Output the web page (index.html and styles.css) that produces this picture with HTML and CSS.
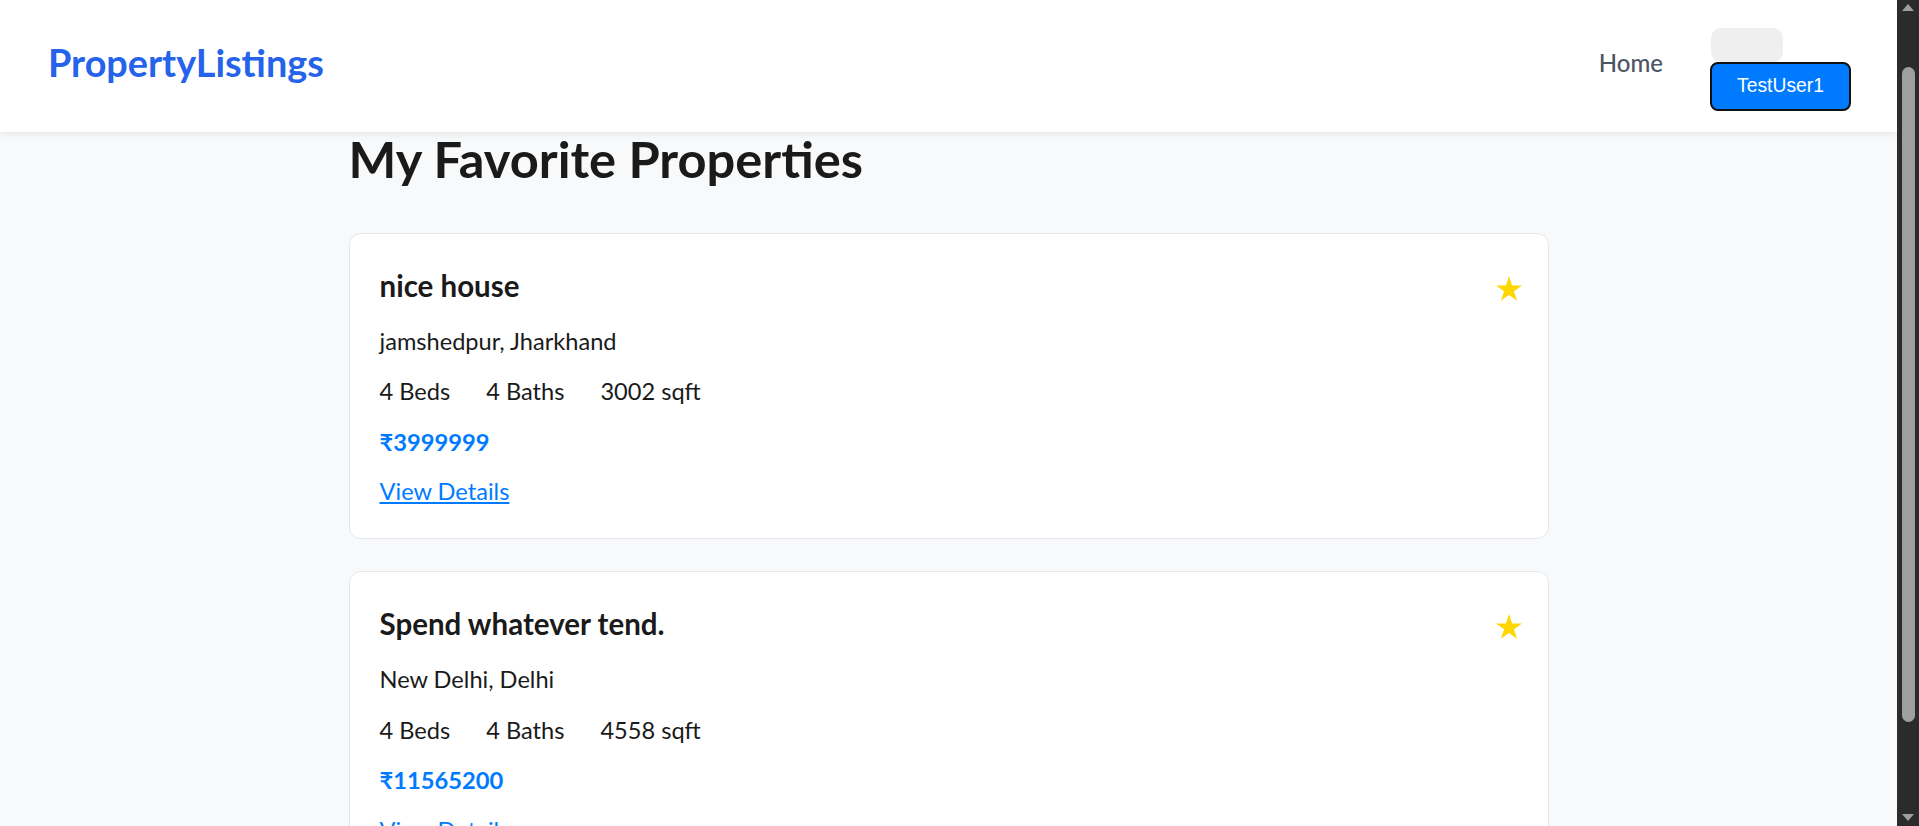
FILE: index.html
```html
<!DOCTYPE html>
<html lang="en">
<head>
<meta charset="utf-8">
<title>My Favorite Properties</title>
<link rel="stylesheet" href="styles.css">
</head>
<body>
<header class="navbar">
  <a class="logo" href="#">PropertyListings</a>
  <nav class="nav-links">
    <a class="nav-link" href="#">Home</a>
    <div class="user-menu">
      <button class="avatar-btn" aria-label="avatar"></button>
      <button class="user-btn">TestUser1</button>
    </div>
  </nav>
</header>
<main class="container">
  <h1 class="page-title">My Favorite Properties</h1>
  <div class="card-list">
    <article class="card">
      <div class="card-head">
        <h2 class="card-title">nice house</h2>
        <button class="fav-btn" aria-label="favorite"><svg viewBox="0 0 26 25" width="26" height="25"><path d="M13 0L16.07 9.45L26 9.45L17.96 15.28L21.03 24.73L13 18.89L4.97 24.73L8.04 15.28L0 9.45L9.93 9.45Z" fill="#ffd700"/></svg></button>
      </div>
      <p class="location">jamshedpur, Jharkhand</p>
      <div class="specs"><span>4 Beds</span><span>4 Baths</span><span>3002 sqft</span></div>
      <p class="price">₹3999999</p>
      <a class="details" href="#">View Details</a>
    </article>
    <article class="card">
      <div class="card-head">
        <h2 class="card-title">Spend whatever tend.</h2>
        <button class="fav-btn" aria-label="favorite"><svg viewBox="0 0 26 25" width="26" height="25"><path d="M13 0L16.07 9.45L26 9.45L17.96 15.28L21.03 24.73L13 18.89L4.97 24.73L8.04 15.28L0 9.45L9.93 9.45Z" fill="#ffd700"/></svg></button>
      </div>
      <p class="location">New Delhi, Delhi</p>
      <div class="specs"><span>4 Beds</span><span>4 Baths</span><span>4558 sqft</span></div>
      <p class="price">₹11565200</p>
      <a class="details" href="#">View Details</a>
    </article>
  </div>
</main>
<div class="scrollbar" aria-hidden="true">
  <span class="sb-arrow sb-up"></span>
  <div class="sb-track"><div class="sb-thumb"></div></div>
  <span class="sb-arrow sb-down"></span>
</div>
</body>
</html>
```
FILE: styles.css
```css
* { box-sizing: border-box; }
html { background: #f8f9fa; overflow: hidden; }
body { margin: 0 22px 0 0; font-family: "Lato", "Noto Sans", sans-serif; color: #1a1a1a; background: #f8f9fa; }

.navbar { position: sticky; top: 0; z-index: 10; height: 132px; background: #fff; display: flex; align-items: center; justify-content: space-between; padding: 0 46px 0 48px; box-shadow: 0 2px 8px rgba(0,0,0,0.08); }
.logo { font-size: 37.8px; font-weight: 700; line-height: 1.2; color: #2563eb; text-decoration: none; margin-bottom: 7px; }
.nav-links { display: flex; align-items: center; gap: 47px; }
.nav-link { font-size: 24px; font-weight: 500; line-height: 1.2; color: #4b5563; text-decoration: none; margin-bottom: 5px; }
.user-menu { display: flex; flex-direction: column; align-items: flex-start; padding-top: 6px; }
.avatar-btn { width: 72px; height: 34px; margin-left: 1px; border: none; border-radius: 10px; background: #efefef; }
.user-btn { width: 141px; height: 49px; border: 2px solid #111; border-radius: 8px; background: #007bff; color: #fff; font-family: "Liberation Sans", Arial, sans-serif; font-size: 19.3px; padding: 0; }

.container { max-width: 1200px; margin: 0 auto; }
.page-title { font-size: 50.6px; font-weight: 700; line-height: 54px; margin: 0 0 47px; }
.card-list { display: flex; flex-direction: column; gap: 32px; }
.card { background: #fff; border: 1px solid #e5e7eb; border-radius: 12px; padding: 30px; display: flex; flex-direction: column; gap: 14.6px; }
.card-head { display: flex; justify-content: space-between; align-items: flex-start; }
.card-title { margin: 0; font-size: 29.5px; font-weight: 700; line-height: 44px; }
.fav-btn { border: none; background: none; padding: 0; margin: 12px -4px 0 0; line-height: 0; }
.location { margin: 0; font-size: 23.6px; line-height: 36px; }
.specs { display: flex; gap: 36px; font-size: 23.6px; line-height: 36px; }
.price { margin: 0; font-size: 23.7px; font-weight: 700; color: #007bff; line-height: 36px; }
.details { font-size: 23.6px; color: #007bff; line-height: 34px; align-self: flex-start; }

.scrollbar { position: fixed; top: 0; right: 0; bottom: 0; width: 22px; background: #2b2b2b; display: flex; flex-direction: column; align-items: center; z-index: 20; }
.sb-arrow { width: 0; height: 0; border-left: 6px solid transparent; border-right: 6px solid transparent; }
.sb-up { margin-top: 4px; border-bottom: 7px solid #9f9f9f; }
.sb-down { margin-bottom: 5px; border-top: 7px solid #9f9f9f; }
.sb-track { flex: 1; width: 100%; display: flex; justify-content: center; padding: 56px 0 92px; }
.sb-thumb { width: 13px; height: 100%; border-radius: 7px; background: #9f9f9f; }
```
